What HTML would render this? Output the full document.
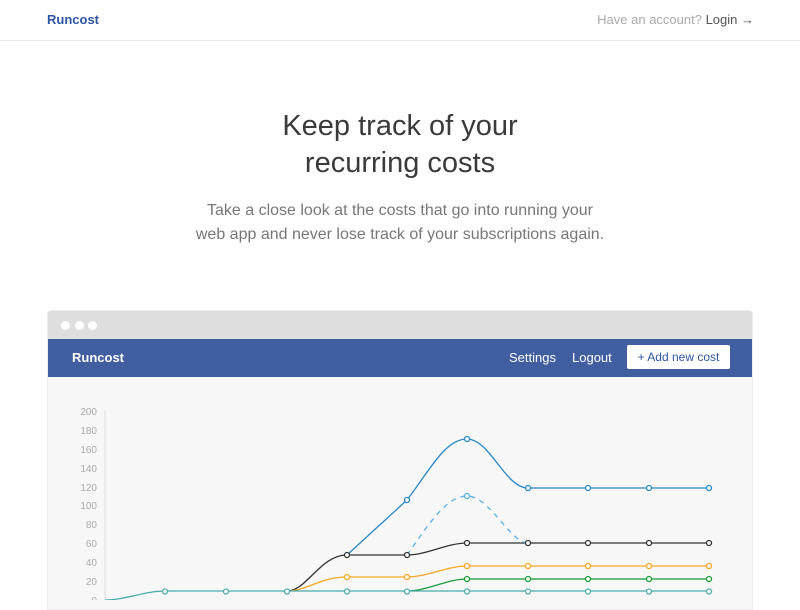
<!DOCTYPE html>
<html><head><meta charset="utf-8"><style>
*{margin:0;padding:0;box-sizing:border-box}
body{width:800px;height:600px;overflow:hidden;background:#fff;font-family:"Liberation Sans",sans-serif;position:relative}
.top{height:41px;border-bottom:1px solid #e8e8e8;position:relative}
.logo{position:absolute;left:47px;top:12px;color:#2f55a4;font-size:13px;font-weight:bold}
.acct{position:absolute;right:46px;top:12px;font-size:13px;color:#aaa}
.acct b{color:#555;font-weight:normal}
h1{position:absolute;top:108px;width:800px;text-align:center;font-size:29px;font-weight:normal;color:#3a3a3a;line-height:37px}
p.sub{position:absolute;top:199px;width:800px;text-align:center;font-size:16px;color:#777;line-height:24px}
.win{position:absolute;left:47px;top:310px;width:706px;height:300px;border-radius:4px 4px 0 0;background:#f7f7f7;overflow:hidden;border:1px solid #ececec}
.bar{height:28px;background:#dedede;position:relative}
.dot{position:absolute;top:10px;width:9px;height:9px;border-radius:50%;background:#fff}
.nav{height:38px;background:#415fa0;position:relative;color:#fff;font-size:13px}
.nav .l{position:absolute;left:24px;top:11px;font-weight:bold}
.nav .s{position:absolute;left:461px;top:11px}
.nav .o{position:absolute;left:524px;top:11px}
.nav .btn{position:absolute;left:579px;top:6px;width:103px;height:24px;background:#fff;color:#2f55a4;border-radius:2px;text-align:center;line-height:24px;font-size:12px}
svg{position:absolute;left:0;top:0}
</style></head><body>
<div class="top"><div class="logo">Runcost</div><div class="acct">Have an account? <b>Login →</b></div></div>
<h1>Keep track of your<br>recurring costs</h1>
<p class="sub">Take a close look at the costs that go into running your<br>web app and never lose track of your subscriptions again.</p>
<div class="win"><div class="bar"><div class="dot" style="left:13px"></div><div class="dot" style="left:27px"></div><div class="dot" style="left:40px"></div></div>
<div class="nav"><span class="l">Runcost</span><span class="s">Settings</span><span class="o">Logout</span><div class="btn">+ Add new cost</div></div></div>
<svg width="800" height="600" font-family="Liberation Sans" font-size="10" fill="#aaa">
<g text-anchor="end">
<text x="97" y="415">200</text><text x="97" y="434">180</text><text x="97" y="453">160</text><text x="97" y="472">140</text><text x="97" y="491">120</text><text x="97" y="509">100</text><text x="97" y="528">80</text><text x="97" y="547">60</text><text x="97" y="566">40</text><text x="97" y="585">20</text><text x="97" y="604">0</text></g>
<line x1="105" y1="410" x2="105" y2="600" stroke="#ddd"/>
<g fill="none" stroke-width="1.3">
<path d="M347 555 C367 555 387 555 407 555 C427 555 447 543 467 543 L709 543 M287 591 C307 591 320 555 347 555" stroke="#333"/>
<path d="M287 591 C307 591 320 577 347 577 L407 577 C427 577 447 566 467 566 L709 566" stroke="#f5a623"/>
<path d="M407 591 C427 591 447 579 467 579 L709 579" stroke="#1a9a3a"/>
<path d="M347 555 L407 500 C430 470 445 439 467 439 C490 439 505 488 528 488 L709 488" stroke="#2a86c4"/>
<path d="M407 555 C425 530 445 496 467 496 C490 496 510 543 528 543" stroke="#5aaee8" stroke-dasharray="5 5"/>
<path d="M105 600 C125 600 145 591 165 591 L709 591" stroke="#4aabab"/>
</g>
<g fill="#fff" stroke-width="1.3">
<g stroke="#4aabab"><circle cx="165" cy="591.5" r="2.5"/><circle cx="226" cy="591.5" r="2.5"/><circle cx="287" cy="591.5" r="2.5"/><circle cx="347" cy="591.5" r="2.5"/><circle cx="407" cy="591.5" r="2.5"/><circle cx="467" cy="591.5" r="2.5"/><circle cx="528" cy="591.5" r="2.5"/><circle cx="588" cy="591.5" r="2.5"/><circle cx="649" cy="591.5" r="2.5"/><circle cx="709" cy="591.5" r="2.5"/></g>
<g stroke="#1a9a3a"><circle cx="467" cy="579" r="2.5"/><circle cx="528" cy="579" r="2.5"/><circle cx="588" cy="579" r="2.5"/><circle cx="649" cy="579" r="2.5"/><circle cx="709" cy="579" r="2.5"/></g>
<g stroke="#f5a623"><circle cx="347" cy="577" r="2.5"/><circle cx="407" cy="577" r="2.5"/><circle cx="467" cy="566" r="2.5"/><circle cx="528" cy="566" r="2.5"/><circle cx="588" cy="566" r="2.5"/><circle cx="649" cy="566" r="2.5"/><circle cx="709" cy="566" r="2.5"/></g>
<g stroke="#333"><circle cx="347" cy="555" r="2.5"/><circle cx="407" cy="555" r="2.5"/><circle cx="467" cy="543" r="2.5"/><circle cx="528" cy="543" r="2.5"/><circle cx="588" cy="543" r="2.5"/><circle cx="649" cy="543" r="2.5"/><circle cx="709" cy="543" r="2.5"/></g>
<g stroke="#2a86c4"><circle cx="407" cy="500" r="2.5"/><circle cx="467" cy="439" r="2.5"/><circle cx="528" cy="488" r="2.5"/><circle cx="588" cy="488" r="2.5"/><circle cx="649" cy="488" r="2.5"/><circle cx="709" cy="488" r="2.5"/></g>
<circle cx="467" cy="496" r="2.5" stroke="#5aaee8"/>
</g>
</svg>
</body></html>
